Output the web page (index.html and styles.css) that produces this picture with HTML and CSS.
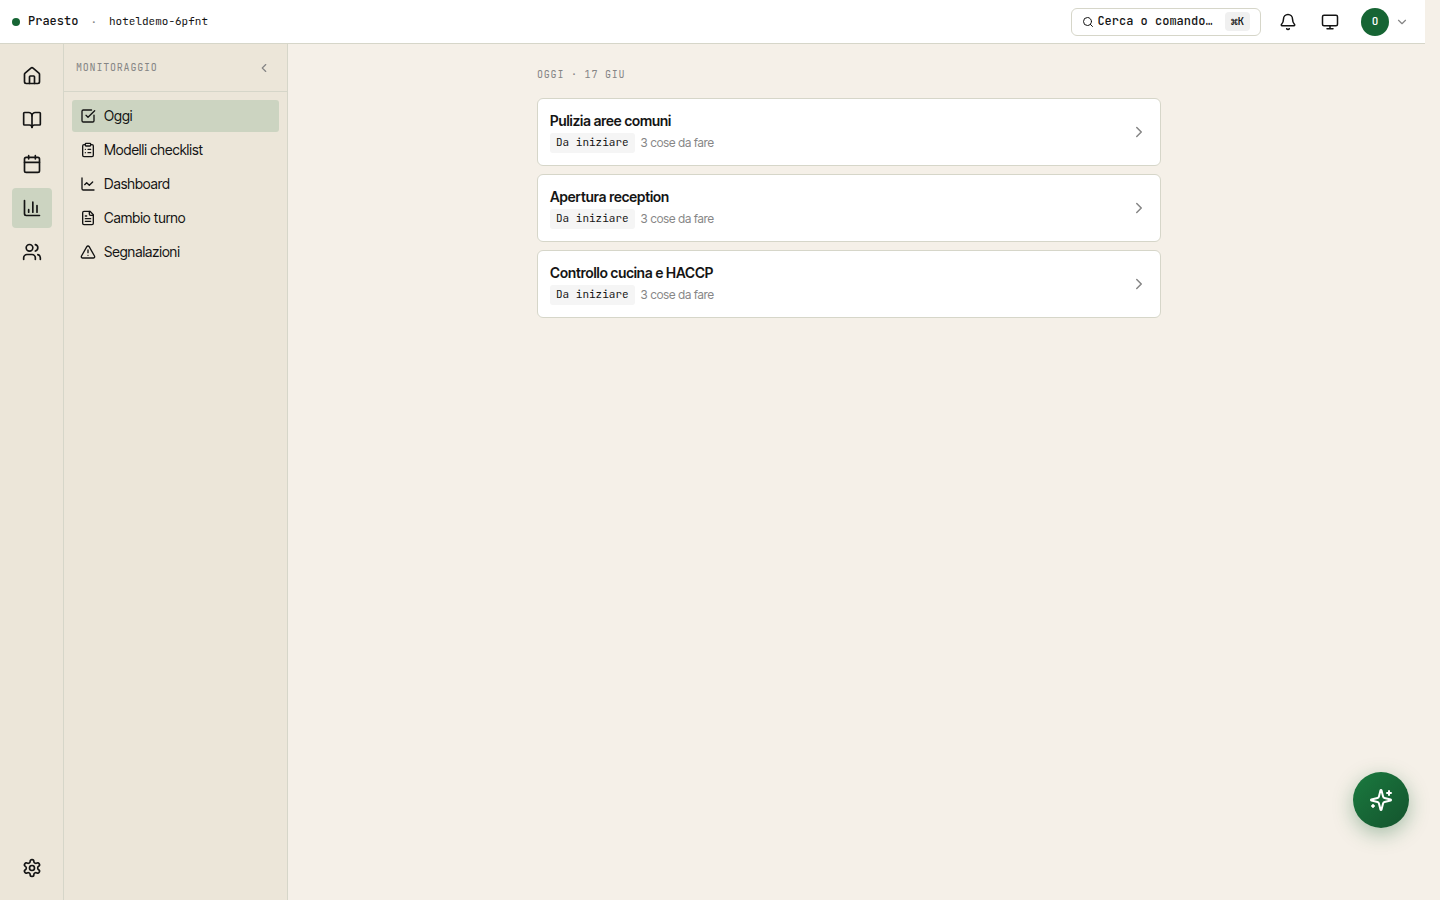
FILE: index.html
```html
<!DOCTYPE html>
<html lang="it">
<head>
<meta charset="utf-8">
<title>Praesto</title>
<link rel="stylesheet" href="styles.css">
</head>
<body>
<div class="app">
  <header class="topbar">
    <span class="status-dot"></span>
    <span class="brand">Praesto</span>
    <span class="separator">·</span>
    <span class="tenant">hoteldemo-6pfnt</span>
    <div class="tools">
      <button class="search">
        <svg class="icon icon-search" viewBox="0 0 24 24"><path d="m21 21-4.34-4.34"/><circle cx="11" cy="11" r="8"/></svg>
        <span class="search-label">Cerca o comando…</span>
        <kbd class="shortcut">⌘K</kbd>
      </button>
      <button class="tool"><svg class="icon icon-tool" viewBox="0 0 24 24"><path d="M10.268 21a2 2 0 0 0 3.464 0"/><path d="M3.262 15.326A1 1 0 0 0 4 17h16a1 1 0 0 0 .74-1.673C19.41 13.956 18 12.499 18 8A6 6 0 0 0 6 8c0 4.499-1.411 5.956-2.738 7.326"/></svg></button>
      <button class="tool"><svg class="icon icon-tool" viewBox="0 0 24 24"><rect width="20" height="14" x="2" y="3" rx="2"/><path d="M8 21h8M12 17v4"/></svg></button>
      <button class="account"><span class="avatar">O</span><svg class="icon icon-caret" viewBox="0 0 24 24"><path d="m6 9 6 6 6-6"/></svg></button>
    </div>
  </header>
  <div class="body">
    <nav class="rail">
      <a class="rail-item"><svg class="icon icon-rail" viewBox="0 0 24 24"><path d="M15 21v-8a1 1 0 0 0-1-1h-4a1 1 0 0 0-1 1v8"/><path d="M3 10a2 2 0 0 1 .709-1.528l7-6a2 2 0 0 1 2.582 0l7 6A2 2 0 0 1 21 10v9a2 2 0 0 1-2 2H5a2 2 0 0 1-2-2z"/></svg></a>
      <a class="rail-item"><svg class="icon icon-rail" viewBox="0 0 24 24"><path d="M12 7v14"/><path d="M3 18a1 1 0 0 1-1-1V4a1 1 0 0 1 1-1h5a4 4 0 0 1 4 4 4 4 0 0 1 4-4h5a1 1 0 0 1 1 1v13a1 1 0 0 1-1 1h-6a3 3 0 0 0-3 3 3 3 0 0 0-3-3z"/></svg></a>
      <a class="rail-item"><svg class="icon icon-rail" viewBox="0 0 24 24"><path d="M8 2v4M16 2v4M3 10h18"/><rect width="18" height="18" x="3" y="4" rx="2"/></svg></a>
      <a class="rail-item active"><svg class="icon icon-rail" viewBox="0 0 24 24"><path d="M3 3v16a2 2 0 0 0 2 2h16M18 17V9M13 17V5M8 17v-3"/></svg></a>
      <a class="rail-item"><svg class="icon icon-rail" viewBox="0 0 24 24"><path d="M16 21v-2a4 4 0 0 0-4-4H6a4 4 0 0 0-4 4v2"/><path d="M16 3.128a4 4 0 0 1 0 7.744M22 21v-2a4 4 0 0 0-3-3.87"/><circle cx="9" cy="7" r="4"/></svg></a>
      <a class="rail-item rail-bottom"><svg class="icon icon-rail" viewBox="0 0 24 24"><path d="M12.22 2h-.44a2 2 0 0 0-2 2v.18a2 2 0 0 1-1 1.73l-.43.25a2 2 0 0 1-2 0l-.15-.08a2 2 0 0 0-2.73.73l-.22.38a2 2 0 0 0 .73 2.73l.15.1a2 2 0 0 1 1 1.72v.51a2 2 0 0 1-1 1.74l-.15.09a2 2 0 0 0-.73 2.73l.22.38a2 2 0 0 0 2.73.73l.15-.08a2 2 0 0 1 2 0l.43.25a2 2 0 0 1 1 1.73V20a2 2 0 0 0 2 2h.44a2 2 0 0 0 2-2v-.18a2 2 0 0 1 1-1.73l.43-.25a2 2 0 0 1 2 0l.15.08a2 2 0 0 0 2.73-.73l.22-.39a2 2 0 0 0-.73-2.73l-.15-.08a2 2 0 0 1-1-1.74v-.5a2 2 0 0 1 1-1.74l.15-.09a2 2 0 0 0 .73-2.73l-.22-.38a2 2 0 0 0-2.73-.73l-.15.08a2 2 0 0 1-2 0l-.43-.25a2 2 0 0 1-1-1.73V4a2 2 0 0 0-2-2z"/><circle cx="12" cy="12" r="3"/></svg></a>
    </nav>
    <aside class="sidebar">
      <div class="sidebar-head">
        <span class="eyebrow">MONITORAGGIO</span>
        <svg class="icon icon-collapse" viewBox="0 0 24 24"><path d="m15 18-6-6 6-6"/></svg>
      </div>
      <div class="menu">
        <a class="menu-item active"><svg class="icon icon-menu" viewBox="0 0 24 24"><path d="M21 10.656V19a2 2 0 0 1-2 2H5a2 2 0 0 1-2-2V5a2 2 0 0 1 2-2h12.344"/><path d="m9 11 3 3L22 4"/></svg><span>Oggi</span></a>
        <a class="menu-item"><svg class="icon icon-menu" viewBox="0 0 24 24"><rect width="8" height="4" x="8" y="2" rx="1"/><path d="M16 4h2a2 2 0 0 1 2 2v14a2 2 0 0 1-2 2H6a2 2 0 0 1-2-2V6a2 2 0 0 1 2-2h2M12 11h4M12 16h4M8 11h.01M8 16h.01"/></svg><span>Modelli checklist</span></a>
        <a class="menu-item"><svg class="icon icon-menu" viewBox="0 0 24 24"><path d="M3 3v16a2 2 0 0 0 2 2h16"/><path d="m19 9-5 5-4-4-3 3"/></svg><span>Dashboard</span></a>
        <a class="menu-item"><svg class="icon icon-menu" viewBox="0 0 24 24"><path d="M15 2H6a2 2 0 0 0-2 2v16a2 2 0 0 0 2 2h12a2 2 0 0 0 2-2V7z"/><path d="M14 2v4a2 2 0 0 0 2 2h4M10 9H8M16 13H8M16 17H8"/></svg><span>Cambio turno</span></a>
        <a class="menu-item"><svg class="icon icon-menu" viewBox="0 0 24 24"><path d="m21.73 18-8-14a2 2 0 0 0-3.48 0l-8 14A2 2 0 0 0 4 21h16a2 2 0 0 0 1.73-3M12 9v4M12 17h.01"/></svg><span>Segnalazioni</span></a>
      </div>
    </aside>
    <main class="main">
      <div class="content">
        <div class="eyebrow date">OGGI · 17 GIU</div>
        <div class="cards">
          <article class="card">
            <div><h2 class="card-title">Pulizia aree comuni</h2><div class="card-meta"><span class="badge">Da iniziare</span><span class="count">3 cose da fare</span></div></div>
            <svg class="icon icon-next" viewBox="0 0 24 24"><path d="m9 18 6-6-6-6"/></svg>
          </article>
          <article class="card">
            <div><h2 class="card-title">Apertura reception</h2><div class="card-meta"><span class="badge">Da iniziare</span><span class="count">3 cose da fare</span></div></div>
            <svg class="icon icon-next" viewBox="0 0 24 24"><path d="m9 18 6-6-6-6"/></svg>
          </article>
          <article class="card">
            <div><h2 class="card-title">Controllo cucina e HACCP</h2><div class="card-meta"><span class="badge">Da iniziare</span><span class="count">3 cose da fare</span></div></div>
            <svg class="icon icon-next" viewBox="0 0 24 24"><path d="m9 18 6-6-6-6"/></svg>
          </article>
        </div>
      </div>
    </main>
  </div>
  <button class="assistant"><svg class="icon icon-assistant" viewBox="0 0 24 24"><path d="M9.937 15.5A2 2 0 0 0 8.5 14.063l-6.135-1.582a.5.5 0 0 1 0-.962L8.5 9.936A2 2 0 0 0 9.937 8.5l1.582-6.135a.5.5 0 0 1 .963 0L14.063 8.5A2 2 0 0 0 15.5 9.937l6.135 1.581a.5.5 0 0 1 0 .964L15.5 14.063a2 2 0 0 0-1.437 1.437l-1.582 6.135a.5.5 0 0 1-.963 0z"/><path d="M20 3v4M22 5h-4M4 17v2M5 18H3"/></svg></button>
</div>
</body>
</html>
```
FILE: styles.css
```css
:root {
  --ink: #141414;
  --muted: #858585;
  --line: #d6d6c9;
  --sand: #ece6d9;
  --sage: #ccd4c1;
  --green: #166534;
  --mono: "JetBrains Mono", "Liberation Mono", "DejaVu Sans Mono", monospace;
}
* { box-sizing: border-box; }
body { margin: 0; background: #f5f0e8; color: var(--ink); font-family: "Inter Tight", Inter, sans-serif; font-size: 14px; }
button { border: 0; padding: 0; background: none; color: inherit; font: inherit; }
.app { width: 1425px; height: 100vh; display: flex; flex-direction: column; }
.icon { display: block; flex: none; fill: none; stroke: currentColor; stroke-width: 2; stroke-linecap: round; stroke-linejoin: round; }

.topbar { flex: none; height: 44px; padding: 0 16px 0 12px; display: flex; align-items: center; background: #fff; border-bottom: 1px solid var(--line); font-family: var(--mono); }
.status-dot { width: 8px; height: 8px; margin-right: 8px; border-radius: 50%; background: var(--green); }
.brand { font-size: 12px; font-weight: 500; line-height: 16px; padding-bottom: 1px; }
.separator { width: 6.6px; margin: 0 12px; font-size: 11px; color: var(--muted); }
.tenant { font-size: 11px; line-height: 16px; padding-bottom: 2px; }
.tools { margin-left: auto; display: flex; align-items: center; }
.search { width: 190px; height: 28px; padding: 0 10px; display: flex; align-items: center; border: 1px solid var(--line); border-radius: 6px; font-size: 12px; font-weight: 500; }
.icon-search { width: 12px; height: 12px; margin-right: 3.4px; }
.search-label { padding-bottom: 2px; }
.shortcut { width: 25px; height: 19px; margin-left: auto; border-radius: 4px; background: #f0f0f0; font: 500 11px/18px var(--mono); text-align: center; }
.tool { width: 32px; height: 32px; margin-left: 10px; display: grid; place-items: center; }
.search + .tool { margin-left: 11px; }
.icon-tool { width: 18px; height: 18px; }
.account { margin-left: 15px; display: flex; align-items: center; gap: 6px; }
.avatar { width: 28px; height: 28px; border-radius: 50%; background: var(--green); color: #fff; font: 500 11px/27px var(--mono); text-align: center; }
.icon-caret { width: 14px; height: 14px; color: var(--muted); }

.body { flex: 1; min-height: 0; display: flex; }
.rail { width: 64px; padding: 12px 0 12px 12px; display: flex; flex-direction: column; gap: 4px; background: var(--sand); border-right: 1px solid var(--line); }
.rail-item { width: 40px; height: 40px; border-radius: 4px; display: grid; place-items: center; }
.rail-bottom { margin-top: auto; }
.icon-rail { width: 20px; height: 20px; }
.active { background: var(--sage); }

.sidebar { width: 224px; background: var(--sand); border-right: 1px solid var(--line); }
.sidebar-head { height: 48px; padding: 0 16px 0 12px; display: flex; align-items: center; justify-content: space-between; border-bottom: 1px solid var(--line); }
.eyebrow { color: var(--muted); font: 400 10px/15px var(--mono); letter-spacing: .8px; }
.icon-collapse { width: 14px; height: 14px; color: var(--muted); }
.menu { padding: 8px; display: flex; flex-direction: column; gap: 2px; }
.menu-item { height: 32px; padding: 0 8px; display: flex; align-items: center; gap: 8px; border-radius: 3px; line-height: 20px; }
.icon-menu { width: 16px; height: 16px; }

.main { flex: 1; padding-top: 23px; }
.content { width: 624px; margin-left: 249px; }
.date { margin-bottom: 16px; }
.cards { display: flex; flex-direction: column; gap: 8px; }
.card { height: 68px; padding: 0 12px; display: flex; align-items: center; justify-content: space-between; background: #fff; border: 1px solid var(--line); border-radius: 6px; }
.card-title { margin: 0 0 2px; font-size: 14px; font-weight: 600; line-height: 20px; }
.card-meta { display: flex; align-items: center; gap: 6px; }
.badge { height: 20px; padding: 0 6px; border-radius: 3px; background: #f5f5f5; font: 400 11px/19px var(--mono); }
.count { color: var(--muted); font-size: 12px; line-height: 16px; }
.icon-next { width: 18px; height: 18px; color: var(--muted); }

.assistant { position: fixed; left: 1353px; top: 772px; width: 56px; height: 56px; border-radius: 50%; display: grid; place-items: center; color: #fff; background: linear-gradient(135deg, #1a7a3f, #14532d); box-shadow: 0 6px 20px rgba(22, 101, 52, .35); }
.icon-assistant { width: 24px; height: 24px; }
```
